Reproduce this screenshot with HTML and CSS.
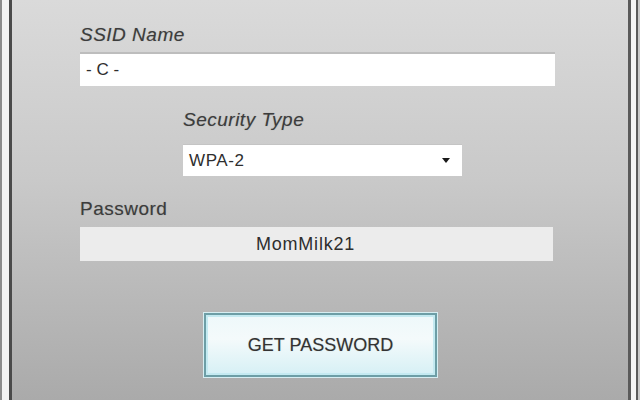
FILE: index.html
```html
<!DOCTYPE html>
<html>
<head>
<meta charset="utf-8">
<link rel="stylesheet" href="styles.css">
</head>
<body>
<div class="win">
  <div class="win-mid">
    <div class="panel">
      <div class="form">
        <div class="label italic">SSID Name</div>
        <div class="field ssid">- C -</div>
        <div class="label italic sec-label">Security Type</div>
        <div class="field select"><span>WPA-2</span><span class="arrow"></span></div>
        <div class="label pw-label">Password</div>
        <div class="field pw">MomMilk21</div>
        <div class="btn-row">
          <div class="btn"><div class="btn-inner">GET PASSWORD</div></div>
        </div>
      </div>
    </div>
  </div>
</div>
</body>
</html>
```
FILE: styles.css
```css
html, body {
  margin: 0;
  padding: 0;
}
body {
  width: 640px;
  height: 400px;
  overflow: hidden;
  font-family: "Liberation Sans", Arial, sans-serif;
}
.win {
  height: 400px;
  box-sizing: border-box;
  border-left: 2px solid #8c8c8c;
  border-right: 2px solid #c8c8c8;
  background: #f2f2f2;
}
.win-mid {
  height: 100%;
  box-sizing: border-box;
  border-left: 7px solid #f3f3f3;
  border-right: 2px solid #5a5a5a;
  display: flex;
}
.win-mid::after {
  content: "";
  width: 5px;
  background: #f4f4f4;
}
.panel {
  flex: 1;
  box-sizing: border-box;
  border-left: 3px solid #4a4a4a;
  border-right: 3px solid #5a5a5a;
  background: linear-gradient(180deg, #dadada 0%, #c9c9c9 45%, #aaaaaa 100%);
  padding: 24px 0 0 68px;
}
.form {
  width: 475px;
  display: flex;
  flex-direction: column;
  align-items: flex-start;
}
.label {
  font-size: 19px;
  line-height: 22px;
  letter-spacing: 0.5px;
  color: #3c3c3c;
  text-shadow: 0 0 1px rgba(60,60,60,0.35);
}
.italic {
  font-style: italic;
}
.field {
  box-sizing: border-box;
  font-size: 17px;
  color: #2e2e2e;
  display: flex;
  align-items: center;
}
.ssid {
  margin-top: 6px;
  width: 475px;
  height: 34px;
  background: #fff;
  border-top: 2px solid #bdbdbd;
  padding-left: 6px;
}
.sec-label {
  margin-top: 23px;
  margin-left: 103px;
}
.select {
  margin-top: 13px;
  margin-left: 103px;
  width: 279px;
  height: 32px;
  background: #fff;
  border-top: 1px solid #c4c4c4;
  padding: 0 12px 0 6px;
  justify-content: space-between;
  letter-spacing: 0.6px;
}
.arrow {
  width: 0;
  height: 0;
  border-left: 4px solid transparent;
  border-right: 4px solid transparent;
  border-top: 5px solid #1a1a1a;
}
.pw-label {
  margin-top: 22px;
}
.pw {
  margin-top: 7px;
  width: 473px;
  height: 34px;
  background: #ececec;
  justify-content: center;
  font-size: 18px;
  letter-spacing: 0.8px;
  padding-right: 22px;
}
.btn-row {
  margin-top: 51px;
  margin-left: 123px;
}
.btn {
  width: 235px;
  height: 66px;
  box-sizing: border-box;
  border: 1px solid #d6eef2;
  display: flex;
}
.btn-inner {
  flex: 1;
  box-sizing: border-box;
  border: 2px solid #6d9ea6;
  box-shadow: inset 0 0 0 2px #c4eaf1;
  background: linear-gradient(180deg, #eef8fa 0%, #f4fafb 40%, #d6f0f5 100%);
  display: flex;
  align-items: center;
  justify-content: center;
  font-size: 18px;
  color: #333;
  text-shadow: 0 0 1px rgba(60,60,60,0.35);
}
```
